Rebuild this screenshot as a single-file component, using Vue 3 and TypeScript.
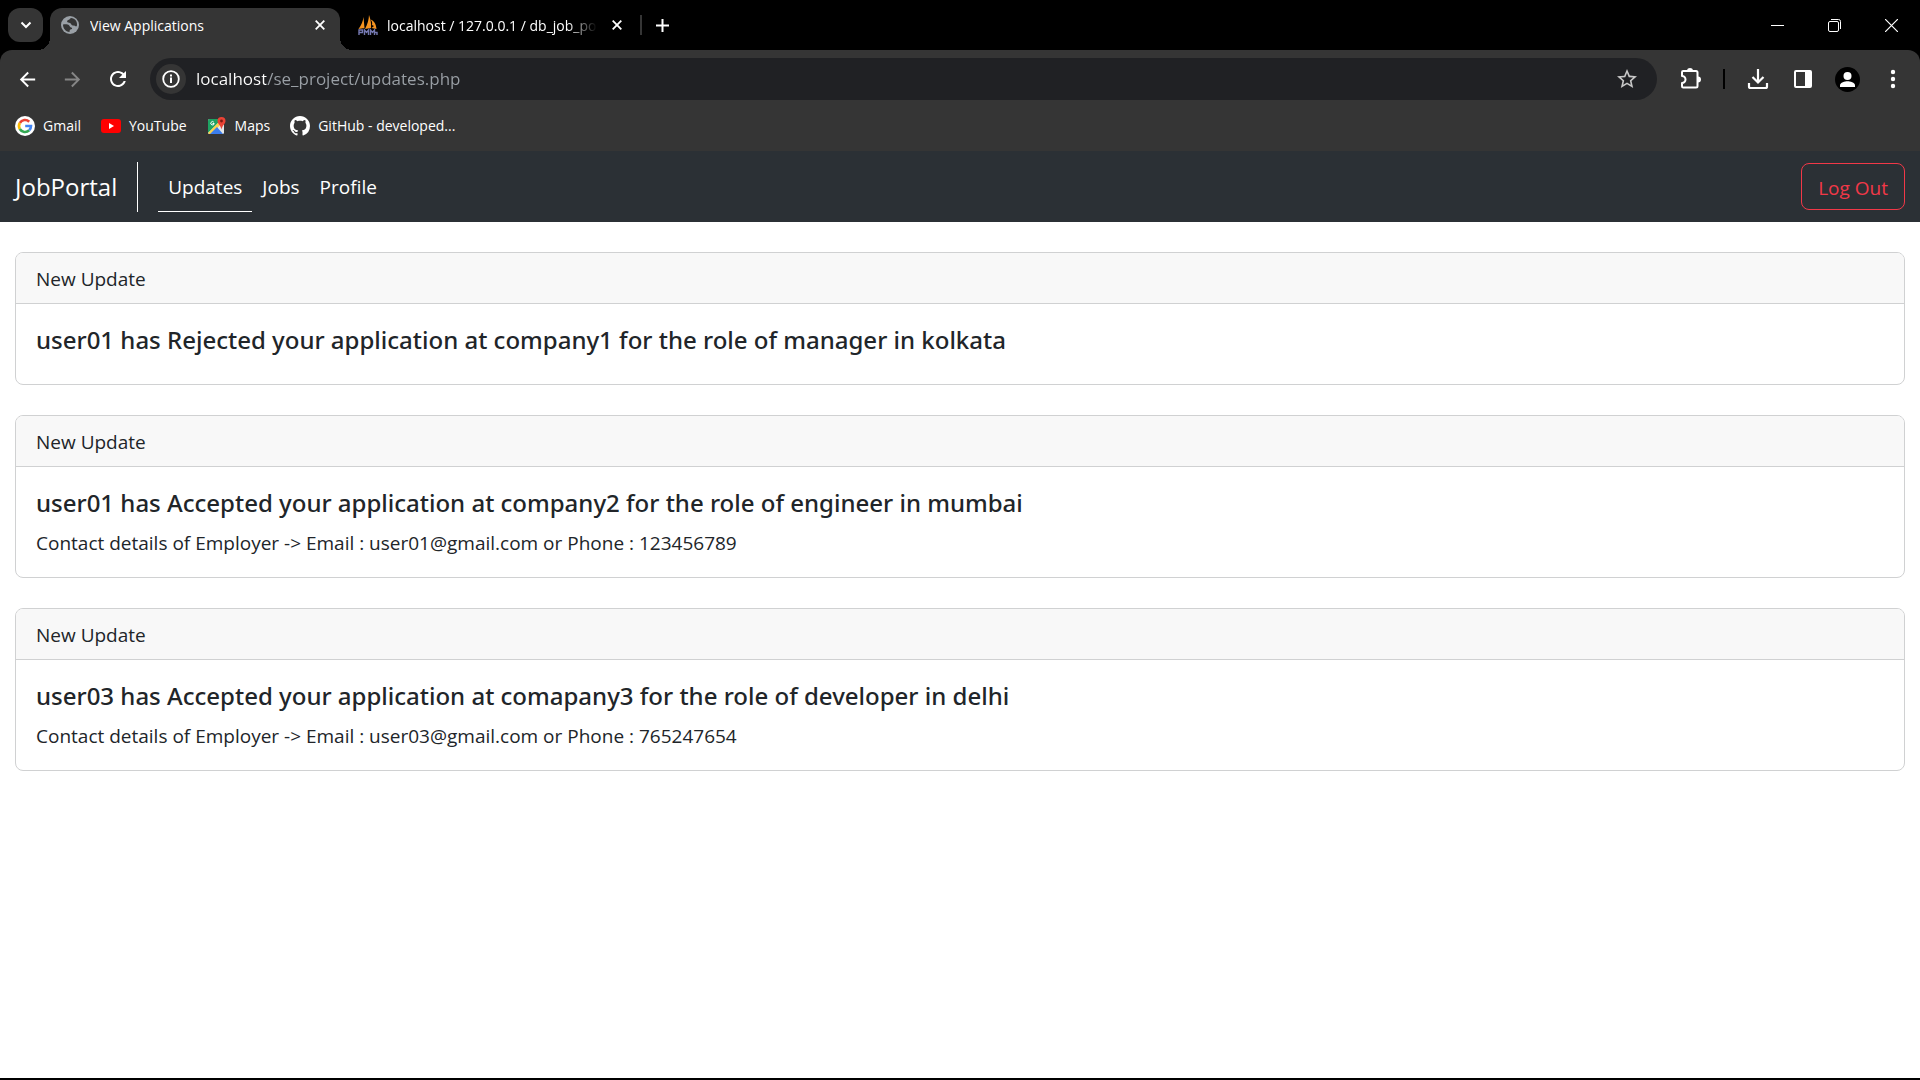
<script setup lang="ts">
import { ref } from 'vue'

interface Update {
  heading: string
  contact?: string
}

const address = ref('localhost/se_project/updates.php')

const links = [
  { label: 'Updates', active: true },
  { label: 'Jobs', active: false },
  { label: 'Profile', active: false },
]

const updates: Update[] = [
  { heading: 'user01 has Rejected your application at company1 for the role of manager in kolkata' },
  {
    heading: 'user01 has Accepted your application at company2 for the role of engineer in mumbai',
    contact: 'Contact details of Employer -> Email : user01@gmail.com or Phone : 123456789',
  },
  {
    heading: 'user03 has Accepted your application at comapany3 for the role of developer in delhi',
    contact: 'Contact details of Employer -> Email : user03@gmail.com or Phone : 765247654',
  },
]
</script>

<template>
  <div class="window">
    <header class="browser">
      <div class="tabstrip">
        <button class="tab-search" type="button" aria-label="Search tabs">
          <svg width="12" height="8" viewBox="0 0 12 8"><path d="M1.5 1.5 6 6l4.500-4.500" fill="none" stroke="#fff" stroke-width="2" /></svg>
        </button>
        <div class="tab active">
          <svg class="fav" width="18" height="18" viewBox="0 0 18 18">
            <circle cx="9" cy="9" r="9" fill="#9aa0a6" />
            <path d="M2 8.500c2.500-.3 5-.3 6 .8 1 1 .6 1.900 2 2.100 1.600.3 1.400 1.500.2 1.900-1.400.4-1.500 1-1.700 2.700C4.500 15.500 2 12.500 2 8.500zM10 2c-1.200.6-1.100 1.500-2.200 1.800-1.400.4-2.300 1.500-1.300 2.400.8.700 2.500.3 3.200 1.400.7 1.200 1.300 2.200 2.800 2 1.200-.2 1.500.9 3.300.7C17 5.800 14 2.300 10 2z" fill="#353535" />
          </svg>
          <span class="tab-title">View Applications</span>
          <button class="icon-btn" type="button" aria-label="Close tab">
            <svg width="10" height="10" viewBox="0 0 10 10"><path d="M.7.7l8.600 8.600M9.300.7L.7 9.300" stroke="#fff" stroke-width="1.800" /></svg>
          </button>
        </div>
        <div class="tab second">
          <svg class="fav" width="20" height="20" viewBox="0 0 20 20">
            <path d="M5.500 2 6.500 13 .5 14C3.500 10 5 6 5.500 2zM11 0c1.500 4 2.500 9 2 13l-6 1C9.500 9 10.800 5 11 0zM12.500 4.500C16 5.500 18 9 18.500 14l-5-1 2.500-2-2-1c.5-2 0-4-1.500-5.500z" fill="#f79420" />
            <path d="M1 20v-5h3.500v2.500H1M6.500 20v-5l2 2.500 2-2.500v5M12.500 20v-5l2 2.500 2-2.500v5M17 17.500h2V20" fill="none" stroke="#7478b0" stroke-width="1.400" />
          </svg>
          <span class="tab-title fade">localhost / 127.0.0.1 / db_job_po</span>
          <button class="icon-btn" type="button" aria-label="Close tab">
            <svg width="10" height="10" viewBox="0 0 10 10"><path d="M.7.7l8.600 8.600M9.300.7L.7 9.300" stroke="#fff" stroke-width="1.800" /></svg>
          </button>
        </div>
        <span class="strip-sep"></span>
        <button class="icon-btn new-tab" type="button" aria-label="New tab">
          <svg width="13" height="13" viewBox="0 0 13 13"><path d="M6.500 0v13M0 6.500h13" stroke="#fff" stroke-width="2" /></svg>
        </button>
        <div class="controls">
          <button type="button" aria-label="Minimize"><svg width="13" height="13" viewBox="0 0 13 13"><path d="M0 6.500h13" stroke="#fff" /></svg></button>
          <button type="button" aria-label="Restore">
            <svg width="13" height="13" viewBox="0 0 13 13" fill="none" stroke="#fff"><rect x=".5" y="2.500" width="10" height="10" rx="1.500" /><path d="M3 .5h7.500a2 2 0 0 1 2 2V10" /></svg>
          </button>
          <button type="button" aria-label="Close"><svg width="13" height="13" viewBox="0 0 13 13"><path d="M0 0l13 13M13 0L0 13" stroke="#fff" stroke-width="1.200" /></svg></button>
        </div>
      </div>

      <div class="toolbar">
        <button class="tool" type="button" aria-label="Back">
          <svg width="23" height="23" viewBox="0 0 24 24"><path d="M20 11H7.830l5.590-5.590L12 4l-8 8 8 8 1.410-1.410L7.830 13H20v-2z" fill="#fff" /></svg>
        </button>
        <button class="tool" type="button" aria-label="Forward">
          <svg width="23" height="23" viewBox="0 0 24 24"><path d="M4 11h12.170l-5.590-5.590L12 4l8 8-8 8-1.410-1.410L16.170 13H4v-2z" fill="#868686" /></svg>
        </button>
        <button class="tool" type="button" aria-label="Reload">
          <svg width="24" height="24" viewBox="0 0 24 24"><path d="M17.650 6.350C16.200 4.900 14.210 4 12 4c-4.420 0-7.990 3.580-7.990 8s3.570 8 7.990 8c3.730 0 6.840-2.550 7.730-6h-2.080c-.82 2.330-3.040 4-5.650 4-3.310 0-6-2.690-6-6s2.690-6 6-6c1.660 0 3.140.69 4.220 1.780L13 11h7V4l-2.350 2.350z" fill="#fff" /></svg>
        </button>
        <div class="omnibox">
          <button class="site-info" type="button" aria-label="View site information">
            <svg width="18" height="18" viewBox="0 0 18 18"><circle cx="9" cy="9" r="7.800" fill="none" stroke="#fff" stroke-width="1.800" /><path d="M8 7.600h2V13H8zM8 4.600h2v2H8z" fill="#fff" /></svg>
          </button>
          <input v-model="address" class="url" type="text" aria-label="Address and search bar" spellcheck="false" />
          <button class="icon-btn star" type="button" aria-label="Bookmark this tab">
            <svg width="24" height="24" viewBox="0 0 24 24"><path d="M22 9.240l-7.190-.62L12 2 9.190 8.630 2 9.240l5.460 4.730L5.820 21 12 17.270 18.180 21l-1.630-7.030L22 9.240zM12 15.400l-3.760 2.270 1-4.280-3.320-2.880 4.380-.38L12 6.100l1.710 4.040 4.380.38-3.320 2.880 1 4.280L12 15.400z" fill="#c7c7c7" /></svg>
          </button>
        </div>
        <button class="tool" type="button" aria-label="Extensions">
          <svg width="22" height="22" viewBox="0 0 22 22">
            <path d="M2 4.200q0-1.200 1.200-1.200H16q1.500 0 1.500 1.500V18q0 1.500-1.500 1.500H3.200Q2 19.500 2 18.300V15a3.500 3.500 0 0 0 0-7z" fill="none" stroke="#fff" stroke-width="2" stroke-linejoin="round" />
            <path d="M7 3a3 3 0 0 1 6 0zM18 8.500a3 3 0 0 1 0 6z" fill="#fff" />
          </svg>
        </button>
        <span class="tool-sep"></span>
        <button class="tool" type="button" aria-label="Downloads">
          <svg width="22" height="22" viewBox="0 0 22 22"><path d="M11 1v13M5.500 9l5.500 5.500L16.500 9M2 15v3.500q0 1.500 1.500 1.500h15q1.500 0 1.500-1.500V15" fill="none" stroke="#fff" stroke-width="2.200" /></svg>
        </button>
        <button class="tool" type="button" aria-label="Side panel">
          <svg width="20" height="20" viewBox="0 0 20 20"><rect x="2" y="2" width="16" height="16" rx="1" fill="none" stroke="#fff" stroke-width="2" /><path d="M12 2h6v16h-6z" fill="#fff" /></svg>
        </button>
        <button class="tool" type="button" aria-label="Profile">
          <svg width="25" height="25" viewBox="0 0 25 25"><circle cx="12.500" cy="12.500" r="12.500" fill="#000" /><circle cx="12.500" cy="9" r="4" fill="#fff" /><path d="M5 20v-1.800c0-2.600 5-4 7.500-4s7.500 1.400 7.500 4V20z" fill="#fff" /></svg>
        </button>
        <button class="tool" type="button" aria-label="Menu">
          <svg width="6" height="20" viewBox="0 0 6 20" fill="#fff"><circle cx="3" cy="3" r="2.200" /><circle cx="3" cy="10" r="2.200" /><circle cx="3" cy="17" r="2.200" /></svg>
        </button>
      </div>

      <nav class="bookmarks" aria-label="Bookmarks">
        <a href="#">
          <svg width="20" height="20" viewBox="0 0 20 20">
            <circle cx="10" cy="10" r="10" fill="#fff" />
            <g fill="none" stroke-width="2.600">
              <path d="M4.850 7A6 6 0 0 1 14.200 5.700" stroke="#ea4335" />
              <path d="M4.800 13A6 6 0 0 1 4.800 7" stroke="#fbbc05" />
              <path d="M14.200 14.300A6 6 0 0 1 4.800 13" stroke="#34a853" />
              <path d="M10.200 10H16A6 6 0 0 1 14.200 14.300" stroke="#4285f4" />
            </g>
          </svg>
          <span>Gmail</span>
        </a>
        <a href="#">
          <svg width="20" height="20" viewBox="0 0 20 20"><rect y="3" width="20" height="14" rx="3" fill="#f00" /><path d="M8 7l5 3-5 3z" fill="#fff" /></svg>
          <span>YouTube</span>
        </a>
        <a href="#">
          <svg width="20" height="20" viewBox="0 0 20 20">
            <rect x="1" y="3" width="16" height="15" rx="1.500" fill="#e4e6e8" />
            <path d="M2.500 3H15L1 17V4.500Q1 3 2.500 3z" fill="#1ea362" />
            <path d="M1 17L12 6l2 2-9 10H2.500z" fill="#fbd24a" />
            <path d="M3 18l7-7 6 7z" fill="#3b7ded" />
            <path d="M6.800 6.200A1.700 1.700 0 1 0 7.200 7.500H5.500" fill="none" stroke="#fff" />
            <path d="M14.500 1a4 4 0 0 1 4 4c0 3-3.200 4-4 8.500-.8-4.500-4-5.500-4-8.500a4 4 0 0 1 4-4z" fill="#ea4335" />
            <circle cx="14.500" cy="5" r="1.400" fill="#7c1a13" />
          </svg>
          <span>Maps</span>
        </a>
        <a href="#">
          <svg width="20" height="20" viewBox="0 0 16 16"><path d="M8 0C3.580 0 0 3.580 0 8c0 3.540 2.290 6.530 5.470 7.590.4.070.55-.17.55-.38 0-.19-.01-.82-.01-1.490-2.010.37-2.530-.49-2.690-.94-.09-.23-.48-.94-.82-1.130-.28-.15-.68-.52-.01-.53.63-.01 1.080.58 1.230.82.72 1.210 1.870.87 2.330.66.070-.52.28-.87.51-1.070-1.780-.2-3.640-.89-3.640-3.950 0-.87.31-1.590.82-2.150-.08-.2-.36-1.020.08-2.120 0 0 .67-.21 2.200.82.64-.18 1.320-.27 2-.27s1.360.09 2 .27c1.530-1.040 2.200-.82 2.200-.82.44 1.100.16 1.920.08 2.120.51.56.82 1.270.82 2.150 0 3.070-1.870 3.750-3.650 3.950.29.25.54.73.54 1.480 0 1.070-.01 1.930-.01 2.200 0 .21.15.46.55.38A8.010 8.010 0 0 0 16 8c0-4.420-3.580-8-8-8z" fill="#fff" /></svg>
          <span>GitHub - developed...</span>
        </a>
      </nav>
    </header>

    <nav class="navbar">
      <a class="brand" href="#">JobPortal</a>
      <ul class="nav-links">
        <li v-for="link in links" :key="link.label">
          <a href="#" :class="{ current: link.active }">{{ link.label }}</a>
        </li>
      </ul>
      <button class="logout" type="button">Log Out</button>
    </nav>

    <main class="page">
      <article v-for="update in updates" :key="update.heading" class="card">
        <div class="card-header">New Update</div>
        <div class="card-body">
          <h5>{{ update.heading }}</h5>
          <p v-if="update.contact">{{ update.contact }}</p>
        </div>
      </article>
    </main>
  </div>
</template>

<style>
body {
  margin: 0;
  background: #fff;
}
</style>

<style scoped>
* {
  box-sizing: border-box;
}

.window {
  display: flex;
  flex-direction: column;
  min-height: 100vh;
  border-bottom: 2px solid #000;
  font-family: 'Open Sans', 'Noto Sans', sans-serif;
  font-size: 19px;
  line-height: 30px;
  color: #212529;
}

button {
  padding: 0;
  border: 0;
  background: none;
  font: inherit;
  color: inherit;
}

a {
  color: inherit;
  text-decoration: none;
}

svg {
  display: block;
  flex: none;
}

.browser {
  background: #000;
  color: #fff;
}

.tabstrip {
  display: flex;
  align-items: center;
  height: 50px;
  padding-left: 8px;
  font-size: 14px;
  line-height: 20px;
}

.tab-search {
  display: grid;
  place-items: center;
  width: 35px;
  height: 34px;
  margin-right: 7px;
  border-radius: 12px;
  background: #353535;
}

.tab {
  display: flex;
  align-items: center;
  width: 290px;
  height: 34px;
  padding: 0 10px 0 11px;
}

.tab.active {
  position: relative;
  align-self: flex-end;
  height: 42px;
  padding-bottom: 8px;
  border-radius: 12px 12px 0 0;
  background: #353535;
}

.tab.active::before,
.tab.active::after {
  content: '';
  position: absolute;
  bottom: 0;
  width: 12px;
  height: 12px;
}

.tab.active::before {
  right: 100%;
  background: radial-gradient(circle at 0 0, transparent 12px, #353535 12px);
}

.tab.active::after {
  left: 100%;
  background: radial-gradient(circle at 100% 0, transparent 12px, #353535 12px);
}

.tab.second {
  margin-left: 7px;
}

.tab-title {
  flex: 1;
  min-width: 0;
  margin: 0 20px 0 11px;
  padding-top: 2px;
  overflow: hidden;
  white-space: nowrap;
}

.tab-title.fade {
  margin: 0 10px 0 9px;
  mask-image: linear-gradient(to left, transparent, #000 30px);
}

.icon-btn {
  display: grid;
  place-items: center;
  width: 20px;
  height: 20px;
}

.strip-sep {
  width: 2px;
  height: 20px;
  margin: 0 10px 0 3px;
  background: #353535;
}

.controls {
  display: flex;
  align-self: stretch;
  margin-left: auto;
}

.controls button {
  display: grid;
  place-items: center;
  width: 57px;
}

.toolbar {
  display: flex;
  align-items: center;
  height: 58px;
  padding: 0 5px;
  border-radius: 12px 12px 0 0;
  background: #353535;
}

.tool {
  display: grid;
  place-items: center;
  width: 45px;
  height: 42px;
}

.omnibox {
  display: flex;
  flex: 1;
  align-items: center;
  height: 42px;
  margin: 0 11px 0 10px;
  padding: 0 18px 0 6px;
  border-radius: 21px;
  background: #202124;
}

.site-info {
  display: grid;
  place-items: center;
  width: 30px;
  height: 30px;
  border-radius: 50%;
  background: #353535;
}

.url {
  flex: 1;
  min-width: 0;
  height: 30px;
  margin-left: 10px;
  padding: 0;
  border: 0;
  outline: 0;
  background: linear-gradient(to right, #fff 70px, #9aa0a6 70px);
  background-clip: text;
  font: inherit;
  font-size: 17px;
  color: transparent;
}

.star {
  width: 24px;
  height: 24px;
}

.tool-sep {
  width: 2px;
  height: 20px;
  margin: 0 10px;
  background: #000;
}

.bookmarks {
  display: flex;
  gap: 20px;
  height: 43px;
  padding: 8px 15px 15px;
  background: #353535;
  font-size: 14px;
  line-height: 20px;
}

.bookmarks a {
  display: flex;
  align-items: center;
  gap: 8px;
}

.navbar {
  display: flex;
  align-items: center;
  min-height: 71px;
  padding: 10px 15px;
  background: #2b3035;
  color: #fff;
}

.brand {
  padding-right: 20px;
  border-right: 1px solid #fff;
  font-size: 24px;
  line-height: 50px;
}

.nav-links {
  display: flex;
  margin: 0 0 0 20px;
  padding: 0;
  list-style: none;
}

.nav-links a {
  display: block;
  padding: 11px 10px 9px;
  border-bottom: 1px solid transparent;
}

.nav-links .current {
  border-bottom-color: #fff;
}

.logout {
  height: 47px;
  margin-left: auto;
  padding: 2px 16px 0;
  border: 1px solid #f23848;
  border-radius: 8px;
  color: #f23848;
}

.page {
  display: flex;
  flex-direction: column;
  gap: 30px;
  padding: 30px 15px;
}

.card {
  overflow: hidden;
  border: 1px solid #d0d1d2;
  border-radius: 8px;
}

.card-header {
  padding: 11px 20px 9px;
  border-bottom: 1px solid #d0d1d2;
  background: #f8f8f8;
}

.card-body {
  padding: 21px 20px 19px;
}

h5 {
  margin: 0 0 10px;
  font-family: 'Noto Sans', 'Open Sans', sans-serif;
  font-size: 24px;
  font-weight: 500;
  line-height: 30px;
}

p {
  margin: 0;
}
</style>
